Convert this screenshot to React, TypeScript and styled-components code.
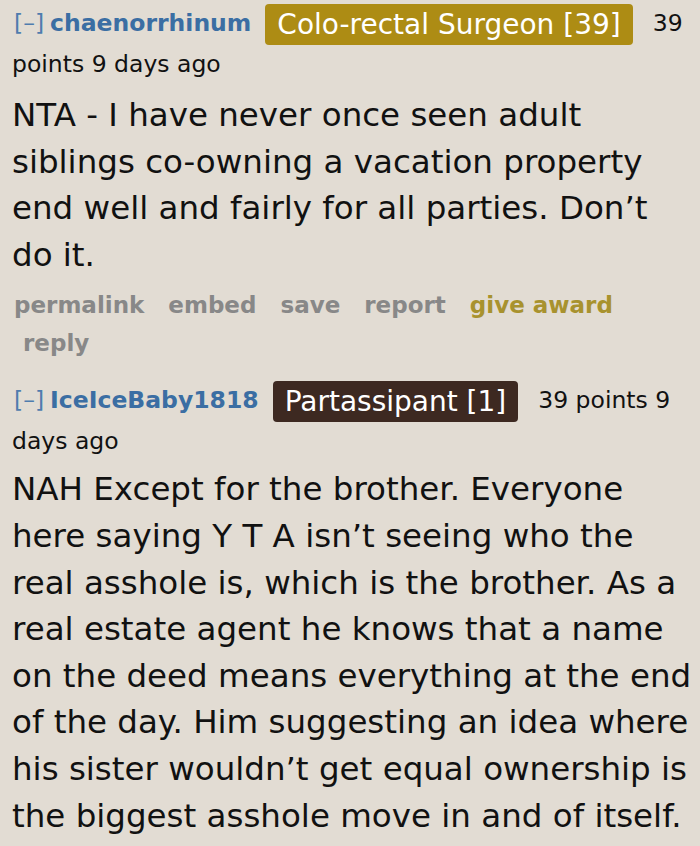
import React from 'react';
import styled, { createGlobalStyle } from 'styled-components';

const GlobalStyle = createGlobalStyle`
  html, body {
    margin: 0;
    padding: 0;
    background: #e2dcd3;
  }
  body {
    font-family: 'DejaVu Sans', Verdana, sans-serif;
    color: #111;
  }
`;

const Page = styled.div`
  width: 700px;
  height: 846px;
  overflow: hidden;
  padding: 0 0 0 12px;
  box-sizing: border-box;
`;

const Comment = styled.div`
  display: flex;
  flex-direction: column;
`;

const Tagline = styled.div<{ $top: number }>`
  padding-top: ${(p) => p.$top}px;
  padding-right: 8px;
  font-size: 23.5px;
  line-height: 39px;
  color: #111;
`;

const Toggle = styled.span`
  color: #4f7cae;
  margin-left: 2px;
  margin-right: 6px;
`;

const Author = styled.span`
  color: #3b6ea3;
  font-weight: bold;
  margin-right: 14px;
`;

const Flair = styled.span<{ $bg: string }>`
  display: inline-block;
  background: ${(p) => p.$bg};
  color: #fff;
  font-size: 28px;
  line-height: 41px;
  padding: 0 12px;
  border-radius: 4px;
  margin-right: 20px;
  vertical-align: -3px;
`;

const Body = styled.div<{ $gap: number }>`
  font-size: 32.5px;
  line-height: 46.6px;
  white-space: nowrap;
  margin-top: ${(p) => p.$gap}px;
`;

const Actions = styled.div`
  display: flex;
  flex-wrap: wrap;
  column-gap: 24px;
  margin-top: 8px;
  padding-right: 10px;
  font-size: 23px;
  line-height: 38px;
  font-weight: bold;
  padding-left: 2px;
`;

const Action = styled.span<{ $award?: boolean; $indent?: boolean }>`
  color: ${(p) => (p.$award ? '#a8922e' : '#888')};
  margin-left: ${(p) => (p.$indent ? '9px' : '0')};
`;

export default function App(): JSX.Element {
  return (
    <Page>
      <GlobalStyle />
      <Comment>
        <Tagline $top={4}>
          <Toggle>[–]</Toggle>
          <Author>chaenorrhinum</Author>
          <Flair $bg="#ad8c14">Colo-rectal Surgeon [39]</Flair>
          39 points 9 days ago
        </Tagline>
        <Body $gap={8}>
          NTA - I have never once seen adult
          <br />
          siblings co-owning a vacation property
          <br />
          end well and fairly for all parties. Don’t
          <br />
          do it.
        </Body>
        <Actions>
          <Action>permalink</Action>
          <Action>embed</Action>
          <Action>save</Action>
          <Action>report</Action>
          <Action $award>give award</Action>
          <Action $indent>reply</Action>
        </Actions>
      </Comment>
      <Comment>
        <Tagline $top={19}>
          <Toggle>[–]</Toggle>
          <Author>IceIceBaby1818</Author>
          <Flair $bg="#3d2921">Partassipant [1]</Flair>
          39 points 9 days ago
        </Tagline>
        <Body $gap={5}>
          NAH Except for the brother. Everyone
          <br />
          here saying Y T A isn’t seeing who the
          <br />
          real asshole is, which is the brother. As a
          <br />
          real estate agent he knows that a name
          <br />
          on the deed means everything at the end
          <br />
          of the day. Him suggesting an idea where
          <br />
          his sister wouldn’t get equal ownership is
          <br />
          the biggest asshole move in and of itself.
        </Body>
      </Comment>
    </Page>
  );
}
